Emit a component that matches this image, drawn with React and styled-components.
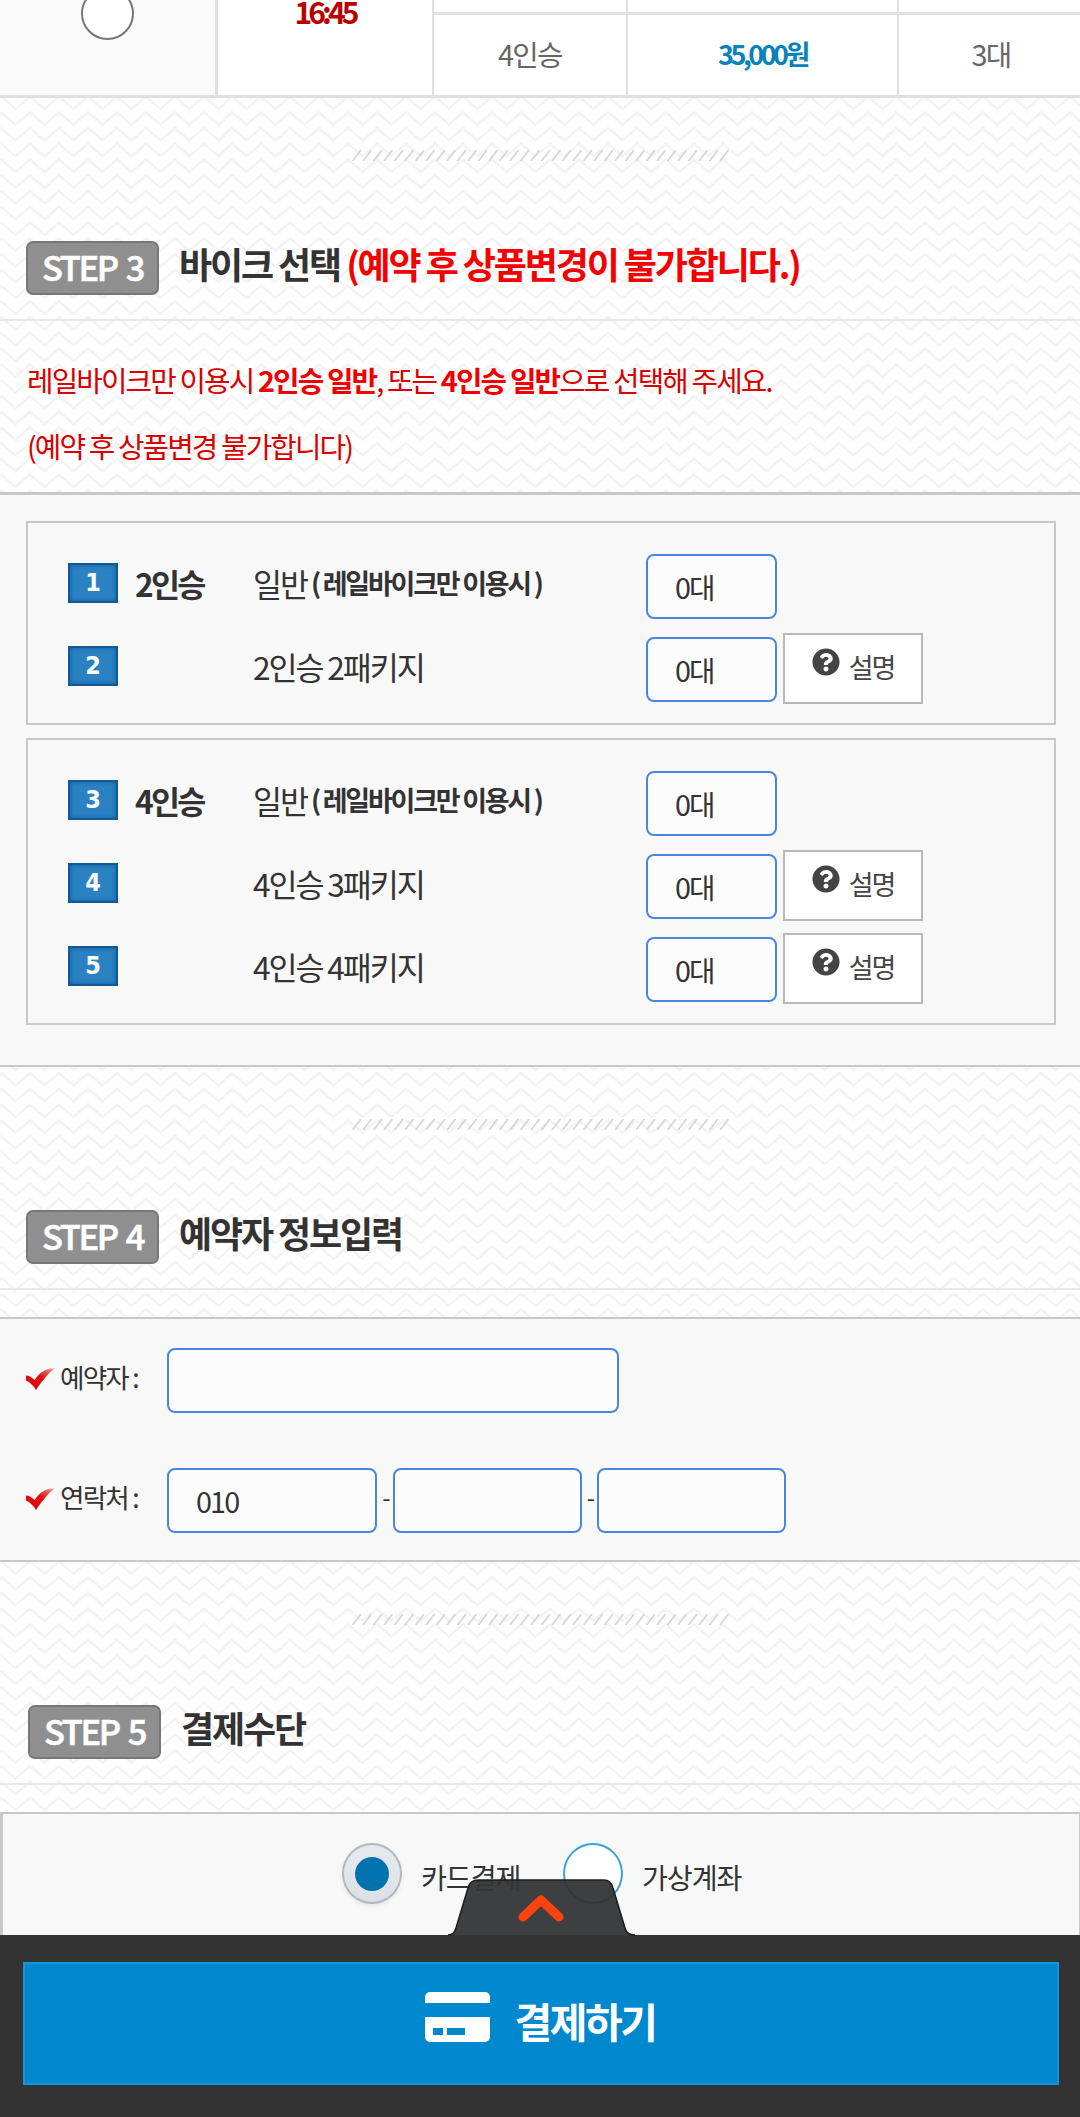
import React, { useState } from "react";
import styled, { createGlobalStyle, css } from "styled-components";
import { FaQuestionCircle } from "react-icons/fa";

// zigzag wallpaper tile: 7 waves wide, 4 waves high
const TILE_W = 202.1;
const TILE_H = 62.98;
const WAVE_W = TILE_W / 7;
const WAVE_H = TILE_H / 4;

const zigzag = () => {
  let lines = "";
  for (let row = -1; row < 5; row++) {
    const top = row * WAVE_H + 2;
    let points = "";
    for (let i = -1; i < 9; i++) {
      const x = i * WAVE_W;
      points += `${x.toFixed(2)},${top.toFixed(2)} ${(x + WAVE_W / 2).toFixed(2)},${(top + 12.5).toFixed(2)} `;
    }
    lines += `<polyline points='${points}'/>`;
  }
  const svg = `<svg xmlns='http://www.w3.org/2000/svg' width='${TILE_W}' height='${TILE_H}' viewBox='0 0 ${TILE_W} ${TILE_H}'><g fill='none' stroke='#f3f3f3' stroke-width='2.4'>${lines}</g></svg>`;
  return `url("data:image/svg+xml,${encodeURIComponent(svg)}")`;
};

const GlobalStyle = createGlobalStyle`
*, *::before, *::after {
box-sizing: border-box;
}
body {
margin: 0;
background-color: #fefefe;
background-image: ${zigzag()};
background-position: 1.5px 0.5px;
background-size: ${TILE_W}px ${TILE_H}px;
color: #333;
font-family: "Noto Sans CJK KR", "Noto Sans", sans-serif;
}
button, input {
font: inherit;
color: inherit;
letter-spacing: inherit;
}
`;

const Page = styled.div`
width: 1080px;
height: 2117px;
overflow: hidden;
font-size: 28.8px;
letter-spacing: -1.73px;
`;

/* ---- time table ---- */

const TimeTable = styled.div`
display: grid;
grid-template-columns: 218px 216px 1fr;
height: 98px;
overflow: hidden;
background: #fff;
border-bottom: 3px solid #dfdfdf;
`;

const RadioCell = styled.div`
display: flex;
justify-content: center;
background: #fafafa;
border-right: 3px solid #e0e0e0;
`;

const TimeRadio = styled.button`
width: 53px;
height: 53px;
margin-top: -13px;
padding: 0;
border: 2px solid #777;
border-radius: 50%;
background: #fff;
`;

const TimeCell = styled.div`
text-align: center;
font-size: 30px;
line-height: 22px;
height: 96px;
font-weight: bold;
letter-spacing: -3.9px;
color: #b80000;
border-right: 2px solid #e0e0e0;
`;

const SeatGrid = styled.div`
display: grid;
grid-template-columns: 194px 271px 1fr;
grid-template-rows: 12px 84px;
`;

const SeatCell = styled.div`
display: flex;
align-items: center;
justify-content: center;
padding-bottom: ${({ $last }) => ($last ? "5px" : "0")};
border-top: ${({ $last }) => ($last ? "3px solid #e0e0e0" : "0")};
border-right: 2px solid #e0e0e0;
color: #666;
&:nth-child(3n) {
border-right: 0;
padding-left: 3px;
}
`;

const Price = styled.b`
font-size: 27px;
letter-spacing: -3.5px;
color: #0782bd;
`;

/* ---- step heading ---- */

const StepHead = styled.header`
padding: 52px 0 24px ${({ $indent }) => ($indent ? "28px" : "26px")};
border-bottom: 2px solid #e8e8e8;
`;

const SlashLine = styled.svg`
display: block;
width: 379px;
height: 11px;
margin: 0 0 80px ${({ $indent }) => ($indent ? "324px" : "326px")};
`;

const TitleRow = styled.div`
display: flex;
height: 54px;
`;

const StepBadge = styled.span`
width: 133px;
height: 54px;
border: 2px solid #777;
border-radius: 7px;
background: #8f8f8f;
color: #fff;
font-size: 34.5px;
font-weight: 500;
line-height: 46px;
letter-spacing: -2.4px;
word-spacing: 3.5px;
text-align: center;
-webkit-text-stroke: 0.6px #fff;
`;

const StepTitle = styled.h2`
margin: 0 0 0 20px;
font-size: 36px;
font-weight: bold;
line-height: 44px;
letter-spacing: -2.12px;
white-space: nowrap;
`;

const Red = styled.span`
color: #f50000;
`;

const Notice = styled.div`
height: 171px;
padding: 26px 0 0 27px;
color: #d80000;
line-height: 65.5px;
letter-spacing: -1.86px;
b {
color: #f00000;
}
`;

const Panel = styled.section`
margin-top: ${({ $gap }) => $gap || "0"};
border-top: 2px solid #c8c8c8;
border-bottom: 2px solid #c8c8c8;
background: #f8f8f8;
`;

/* ---- step 3 ---- */

const BikePanel = styled(Panel)`
display: flex;
flex-direction: column;
gap: 13px;
height: 575px;
border-top-width: 3px;
padding: 26px 24px 0 26px;
`;

const OptionBox = styled.div`
height: ${({ $rows }) => 38 + $rows * 83}px;
padding: 22px 0 0 40px;
border: 2px solid #c8c8c8;
`;

const OptionRow = styled.div`
display: grid;
grid-template-columns: 50px 134px 394px 131px 140px;
align-items: center;
height: 83px;
font-size: 31.6px;
letter-spacing: -2.1px;
white-space: nowrap;
`;

const NumberBadge = styled.span`
height: 40px;
margin-bottom: 8px;
border: 2px solid #0f5a94;
background: #2a82c3;
box-shadow: inset 0 0 4px #12599a;
color: #fff;
font-family: "DejaVu Sans Condensed", "DejaVu Sans", sans-serif;
font-size: 25px;
font-weight: bold;
line-height: 36px;
letter-spacing: 0;
text-align: center;
`;

const GroupName = styled.b`
padding: 0 0 8px 17px;
letter-spacing: -2.7px;
`;

const OptionName = styled.span`
padding: 0 0 8px 1px;
small {
display: inline-block;
font-size: 27px;
line-height: 30px;
letter-spacing: -2.25px;
font-weight: bold;
margin-left: 4px;
vertical-align: 3px;
}
`;

const field = css`
height: 65px;
border: 2px solid #4a86e0;
border-radius: 8px;
background: #fcfcfc;
outline: none;
`;

const CountSelect = styled.button`
${field}
padding: 0 0 1px 27px;
font-size: 28.8px;
letter-spacing: -1.9px;
text-align: left;
`;

const HelpButton = styled.button`
display: flex;
justify-content: center;
gap: 9px;
width: 140px;
height: 71px;
margin: 0 0 2px 6px;
padding: 13px 0 0;
border: 2px solid #b8b8b8;
background: #fff;
color: #444;
font-size: 27px;
line-height: 38px;
letter-spacing: -2px;
svg {
width: 28px;
height: 28px;
}
`;

/* ---- step 4 ---- */

const UserPanel = styled(Panel)`
height: 245px;
padding: 29px 0 0 26px;
`;

const FieldRow = styled.div`
display: flex;
align-items: center;
height: 65px;
margin-bottom: 55px;
`;

const FieldLabel = styled.label`
display: flex;
align-items: center;
width: 141px;
padding-bottom: 9px;
font-size: 26.6px;
letter-spacing: -1.8px;
white-space: pre;
svg {
width: 29px;
height: 24px;
margin: 5px 5px 0 0;
}
`;

const TextInput = styled.input`
${field}
width: ${({ $width }) => $width}px;
padding: 0 0 0 28px;
`;

const PhonePrefix = styled(CountSelect)`
width: 210px;
`;

const Dash = styled.span`
width: ${({ $width }) => $width}px;
padding: 0 0 9px 3px;
text-align: center;
letter-spacing: 0;
font-size: 24px;
`;

/* ---- step 5 ---- */

const PayPanel = styled(Panel)`
display: flex;
height: 305px;
padding: 29px 0 0 339px;
border-left: 3px solid #c8c8c8;
border-right: 1px solid #c8c8c8;
`;

const PayOption = styled.label`
display: flex;
width: 221px;
`;

const PayRadio = styled.button`
display: flex;
align-items: center;
justify-content: center;
width: 60px;
height: 61px;
padding: 0;
border: 2px solid ${({ $on }) => ($on ? "#adb8c0" : "#3aa3d4")};
border-radius: 50%;
background: ${({ $on }) => ($on ? "linear-gradient(#e6eaee, #dde1e5)" : "#fff")};
box-shadow: ${({ $on }) => ($on ? "0 2px 4px rgba(0, 0, 0, 0.08)" : "none")};
&::before {
content: "";
width: 34px;
height: 34px;
border-radius: 50%;
background: ${({ $on }) => ($on ? "#0072ad" : "transparent")};
}
`;

const PayName = styled.span`
padding: 14px 0 0 19px;
font-size: 28.2px;
line-height: 40px;
letter-spacing: -1.1px;
`;

/* ---- bottom bar ---- */

const BottomBar = styled.footer`
position: fixed;
left: 0;
bottom: 0;
width: 1080px;
height: 182px;
padding: 27px 21px 0 23px;
background: #333;
`;

const OpenTab = styled.svg`
position: absolute;
left: 448px;
top: -57px;
width: 187px;
height: 58px;
`;

const PayButton = styled.button`
display: flex;
align-items: center;
justify-content: center;
gap: 25px;
width: 100%;
height: 123px;
padding: 0 2px 0 0;
border: 2px solid #1496d8;
background: #0088ce;
color: #fff;
font-size: 41px;
font-weight: bold;
letter-spacing: -2.5px;
svg {
width: 65px;
height: 50px;
margin-bottom: 13px;
}
span {
line-height: 50px;
margin-bottom: 8px;
}
`;

const Slashes = ({ indent }) => (
  <SlashLine $indent={indent} viewBox="0 0 379 11" stroke="#d6d6d6" strokeWidth="1.8">
    {Array.from({ length: 36 }, (_, i) => (
      <path key={i} d={`M${i * 10.5 + 0.5} 11l8.5 -11`} />
    ))}
  </SlashLine>
);

const CheckMark = () => (
  <svg viewBox="0 0 29 24">
    <defs>
      <linearGradient id="check" x1="0" y1="1" x2="1" y2="0">
        <stop offset="0.55" stopColor="#de0c0c" />
        <stop offset="1" stopColor="#f2a0a0" />
      </linearGradient>
    </defs>
    <path d="M0 8.500C3 8.500 6 10.500 8.500 13C14 5 20 1 28.500 1.500C21 7.500 15 15.500 10 23C7 18.500 4 15 0 13.500z" fill="url(#check)" />
  </svg>
);

const CardIcon = () => (
  <svg viewBox="0 0 65 50" fill="#fff">
    <path d="M5 0h55a5 5 0 0 1 5 5v6H0V5a5 5 0 0 1 5-5z" />
    <path
      fillRule="evenodd"
      d="M0 25h65v20a5 5 0 0 1-5 5H5a5 5 0 0 1-5-5zM8 36v7h10v-7zM22 36v7h18v-7z"
    />
  </svg>
);

const StepHeader = ({ step, title, warning, indent }) => (
  <StepHead $indent={indent}>
    <Slashes indent={indent} />
    <TitleRow>
      <StepBadge>STEP {step}</StepBadge>
      <StepTitle>
        {title}
        {warning && <Red> {warning}</Red>}
      </StepTitle>
    </TitleRow>
  </StepHead>
);

const bikeGroups = [
  {
    name: "2인승",
    options: [{ no: 1 }, { no: 2, name: "2인승 2패키지" }],
  },
  {
    name: "4인승",
    options: [{ no: 3 }, { no: 4, name: "4인승 3패키지" }, { no: 5, name: "4인승 4패키지" }],
  },
];

const BikeOption = ({ group, option }) => {
  const isBasic = !option.name;
  return (
    <OptionRow>
      <NumberBadge>{option.no}</NumberBadge>
      <GroupName>{isBasic && group}</GroupName>
      {isBasic ? (
        <OptionName>
          일반<small>( 레일바이크만 이용시 )</small>
        </OptionName>
      ) : (
        <OptionName>{option.name}</OptionName>
      )}
      <CountSelect>0대</CountSelect>
      {!isBasic && (
        <HelpButton>
          <FaQuestionCircle />
          설명
        </HelpButton>
      )}
    </OptionRow>
  );
};

const App = () => {
  const [method, setMethod] = useState("card");

  return (
    <Page>
      <GlobalStyle />
      <TimeTable>
        <RadioCell>
          <TimeRadio />
        </RadioCell>
        <TimeCell>16:45</TimeCell>
        <SeatGrid>
          <SeatCell />
          <SeatCell />
          <SeatCell />
          <SeatCell $last>4인승</SeatCell>
          <SeatCell $last>
            <Price>35,000원</Price>
          </SeatCell>
          <SeatCell $last>3대</SeatCell>
        </SeatGrid>
      </TimeTable>

      <StepHeader step={3} title="바이크 선택" warning="(예약 후 상품변경이 불가합니다.)" />
      <Notice>
        레일바이크만 이용시 <b>2인승 일반</b>, 또는 <b>4인승 일반</b>으로 선택해 주세요.
        <br />
        (예약 후 상품변경 불가합니다)
      </Notice>
      <BikePanel>
        {bikeGroups.map(group => (
          <OptionBox key={group.name} $rows={group.options.length}>
            {group.options.map(option => (
              <BikeOption key={option.no} group={group.name} option={option} />
            ))}
          </OptionBox>
        ))}
      </BikePanel>

      <StepHeader step={4} title="예약자 정보입력" />
      <UserPanel $gap="27px">
        <FieldRow>
          <FieldLabel>
            <CheckMark />
            예약자 :
          </FieldLabel>
          <TextInput $width={452} />
        </FieldRow>
        <FieldRow>
          <FieldLabel>
            <CheckMark />
            연락처 :
          </FieldLabel>
          <PhonePrefix>010</PhonePrefix>
          <Dash $width={16}>-</Dash>
          <TextInput $width={189} />
          <Dash $width={15}>-</Dash>
          <TextInput $width={189} />
        </FieldRow>
      </UserPanel>

      <StepHeader step={5} title="결제수단" indent />
      <PayPanel $gap="27px">
        <PayOption>
          <PayRadio $on={method === "card"} onClick={() => setMethod("card")} />
          <PayName>카드결제</PayName>
        </PayOption>
        <PayOption>
          <PayRadio $on={method === "account"} onClick={() => setMethod("account")} />
          <PayName>가상계좌</PayName>
        </PayOption>
      </PayPanel>

      <BottomBar>
        <OpenTab viewBox="0 0 187 58">
          <path
            d="M0 57C5 57 7 54 8 50L20 10Q22 2 30 2H156Q163 2 165 10L177 50C178 54 180 57 187 57V58H0z"
            fill="#333537"
            fillOpacity="0.95"
          />
          <path
            d="M0 57C5 57 7 54 8 50L20 10Q22 2 30 2H156Q163 2 165 10L177 50C178 54 180 57 187 57"
            fill="none"
            stroke="#1c1c1c"
            strokeWidth="1.5"
          />
          <path
            d="M75 39L93 22L111 39"
            fill="none"
            stroke="#ff430f"
            strokeWidth="9"
            strokeLinecap="round"
            strokeLinejoin="round"
          />
        </OpenTab>
        <PayButton>
          <CardIcon />
          <span>결제하기</span>
        </PayButton>
      </BottomBar>
    </Page>
  );
};

export default App;
